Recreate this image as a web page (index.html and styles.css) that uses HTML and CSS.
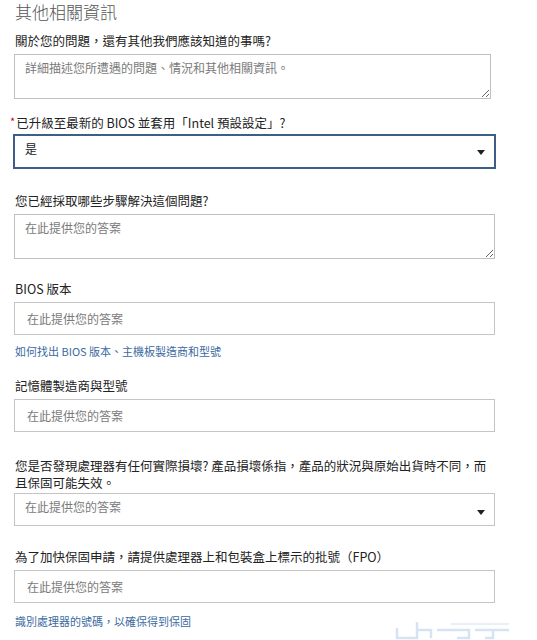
FILE: index.html
```html
<!DOCTYPE html>
<html lang="zh-Hant">
<head>
<meta charset="utf-8">
<title>其他相關資訊</title>
<link rel="stylesheet" href="styles.css">
</head>
<body>
<div class="page">
  <h2 class="title">其他相關資訊</h2>

  <div class="field f1">
    <div class="label">關於您的問題，還有其他我們應該知道的事嗎?</div>
    <textarea class="area area-narrow" placeholder="詳細描述您所遭遇的問題、情況和其他相關資訊。"></textarea>
  </div>

  <div class="field f2">
    <div class="label label-req"><span class="req">*</span>已升級至最新的 BIOS 並套用「Intel 預設設定」?</div>
    <div class="select select-active">
      <span class="select-value">是</span>
      <span class="caret"></span>
    </div>
  </div>

  <div class="field f3">
    <div class="label">您已經採取哪些步驟解決這個問題?</div>
    <textarea class="area" placeholder="在此提供您的答案"></textarea>
  </div>

  <div class="field f4">
    <div class="label">BIOS 版本</div>
    <input class="input" type="text" placeholder="在此提供您的答案">
    <a class="help" href="#">如何找出 BIOS 版本、主機板製造商和型號</a>
  </div>

  <div class="field f5">
    <div class="label">記憶體製造商與型號</div>
    <input class="input" type="text" placeholder="在此提供您的答案">
  </div>

  <div class="field f6">
    <div class="label label-tight">您是否發現處理器有任何實際損壞? 產品損壞係指，產品的狀況與原始出貨時不同，而且保固可能失效。</div>
    <div class="select select-plain">
      <span class="select-placeholder">在此提供您的答案</span>
      <span class="caret caret-low"></span>
    </div>
  </div>

  <div class="field f7">
    <div class="label">為了加快保固申請，請提供處理器上和包裝盒上標示的批號（FPO）</div>
    <input class="input" type="text" placeholder="在此提供您的答案">
    <a class="help help-last" href="#">識別處理器的號碼，以確保得到保固</a>
  </div>
</div>

<svg class="mark" width="124" height="26" viewBox="0 0 124 26" aria-hidden="true">
  <g fill="none" stroke="#d6e3f3" stroke-width="2.5">
    <path d="M6 14 V24 H26 V8"/>
    <path d="M26 16 H40 V24"/>
    <path d="M46 16 H78 V24 H66"/>
    <path d="M84 16 H118 M102 16 V24 H94"/>
  </g>
  <g fill="none" stroke="#e8eff8" stroke-width="2">
    <path d="M60 10 H118"/>
  </g>
</svg>
</body>
</html>
```

FILE: styles.css
```css
html, body {
  margin: 0;
  padding: 0;
  background: #ffffff;
}

body {
  font-family: "Noto Sans CJK TC", "Noto Sans", "Liberation Sans", sans-serif;
  color: #222222;
  position: relative;
  min-height: 640px;
  overflow: hidden;
}

.page {
  padding-left: 14px;
  display: flex;
  flex-direction: column;
}

.title {
  margin: 0;
  font-size: 17px;
  line-height: 24px;
  font-weight: 300;
  color: #555555;
  padding-left: 1px;
}

.field {
  display: flex;
  flex-direction: column;
  align-items: flex-start;
}

.f1 { margin-top: 8px; }
.f2 { margin-top: 14px; }
.f3 { margin-top: 23px; }
.f4 { margin-top: 21px; }
.f5 { margin-top: 18px; }
.f6 { margin-top: 25px; }
.f7 { margin-top: 22px; }

.label {
  font-size: 12.5px;
  line-height: 17px;
  margin: 0 0 5px 1px;
  color: #222222;
}

.label-req {
  margin-bottom: 3px;
}

.label-tight {
  width: 482px;
  margin-bottom: 2px;
}

.req {
  color: #d0021b;
  font-size: 11px;
  margin-left: -5px;
  margin-right: 1px;
  vertical-align: 2px;
}

.area {
  box-sizing: border-box;
  width: 481px;
  height: 45px;
  border: 1px solid #bfbfbf;
  border-radius: 0;
  padding: 4px 10px;
  font-family: inherit;
  font-size: 12px;
  line-height: 17px;
  color: #222222;
  margin: 0;
  display: block;
}

.area-narrow {
  width: 477px;
}

.area::placeholder,
.input::placeholder {
  color: #7a7a7a;
}

.input {
  box-sizing: border-box;
  width: 481px;
  height: 33px;
  border: 1px solid #c4c4c4;
  border-radius: 0;
  padding: 0 12px;
  font-family: inherit;
  font-size: 12px;
  color: #222222;
  margin: 0;
  display: block;
}

.select {
  box-sizing: border-box;
  display: flex;
  justify-content: space-between;
  align-items: center;
  font-size: 12px;
  line-height: 17px;
}

.select-active {
  width: 483px;
  height: 35px;
  margin-left: -1px;
  border: 2px solid #3f5e86;
  padding: 0 9px 0 10px;
}

.select-value {
  color: #222222;
  margin-top: -6px;
}

.select-plain {
  width: 481px;
  height: 33px;
  border: 1px solid #c4c4c4;
  padding: 0 9px 0 10px;
}

.select-placeholder {
  color: #7a7a7a;
  margin-top: -6px;
}

.caret {
  width: 0;
  height: 0;
  border-left: 4px solid transparent;
  border-right: 4px solid transparent;
  border-top: 5px solid #222222;
  margin-top: 2px;
}

.caret-low {
  margin-top: 5px;
}

.help {
  font-size: 11px;
  line-height: 15px;
  color: #3b6aa0;
  text-decoration: none;
  margin-top: 9px;
  margin-left: 1px;
}

.help-last {
  margin-top: 11px;
}

.mark {
  position: absolute;
  right: 22px;
  bottom: 0;
}
```
